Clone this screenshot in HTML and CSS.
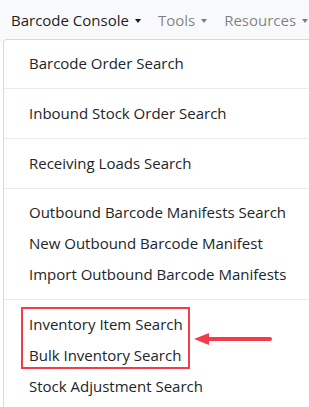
FILE: index.html
```html
<!DOCTYPE html>
<html>
<head>
<meta charset="utf-8">
<link rel="stylesheet" href="styles.css">
</head>
<body>
<nav class="navbar">
  <a class="nav-link active">Barcode Console<span class="caret"></span></a>
  <a class="nav-link">Tools<span class="caret"></span></a>
  <a class="nav-link">Resources<span class="caret"></span></a>
</nav>
<div class="dropdown-menu">
  <a class="dropdown-item">Barcode Order Search</a>
  <div class="divider"></div>
  <a class="dropdown-item">Inbound Stock Order Search</a>
  <div class="divider"></div>
  <a class="dropdown-item">Receiving Loads Search</a>
  <div class="divider"></div>
  <a class="dropdown-item">Outbound Barcode Manifests Search</a>
  <a class="dropdown-item">New Outbound Barcode Manifest</a>
  <a class="dropdown-item">Import Outbound Barcode Manifests</a>
  <div class="divider"></div>
  <div class="highlight-group">
    <a class="dropdown-item">Inventory Item Search</a>
    <a class="dropdown-item">Bulk Inventory Search</a>
    <div class="highlight-box"></div>
    <svg class="arrow" width="82" height="20" viewBox="0 0 82 20">
      <path d="M14 10 H78" stroke="#f23c4c" stroke-width="4" stroke-linecap="round" fill="none"/>
      <path d="M2 10 L17 4 L17 16 Z" fill="#f23c4c"/>
    </svg>
  </div>
  <a class="dropdown-item">Stock Adjustment Search</a>
</div>
</body>
</html>
```
FILE: styles.css
```css
html, body {
  margin: 0;
  padding: 0;
  background: #fff;
  overflow: hidden;
  height: 407px;
  font-family: "Open Sans", "Noto Sans", sans-serif;
  color: #212529;
}
.navbar {
  background: #f8f9fa;
  height: 43px;
  display: flex;
  align-items: center;
  padding-left: 3px;
  padding-bottom: 3px;
  box-sizing: border-box;
  white-space: nowrap;
}
.nav-link {
  padding: 0 9px 0 8px;
  font-size: 15px;
  color: rgba(0, 0, 0, 0.5);
  display: flex;
  align-items: center;
}
.nav-link.active {
  color: rgba(0, 0, 0, 0.9);
}
.caret {
  display: inline-block;
  margin-left: 6px;
  margin-top: 1px;
  border-top: 4px solid currentColor;
  border-left: 3px solid transparent;
  border-right: 3px solid transparent;
}
.dropdown-menu {
  position: absolute;
  left: 3px;
  top: 39px;
  width: 330px;
  border: 1px solid rgba(0, 0, 0, 0.15);
  border-radius: 4px;
  background: #fff;
  padding: 8px 0;
}
.dropdown-item {
  display: block;
  padding: 0 25px;
  height: 31px;
  line-height: 31px;
  font-size: 15px;
  color: #212529;
  white-space: nowrap;
}
.divider {
  height: 0;
  border-top: 1px solid #e9ecef;
  margin: 9px 0 8.75px;
}
.highlight-group {
  position: relative;
}
.highlight-box {
  position: absolute;
  left: 17px;
  top: -2.5px;
  width: 165px;
  height: 58px;
  border: 2.5px solid #f23c4c;
}
.arrow {
  position: absolute;
  left: 188px;
  top: 19.5px;
}
```
